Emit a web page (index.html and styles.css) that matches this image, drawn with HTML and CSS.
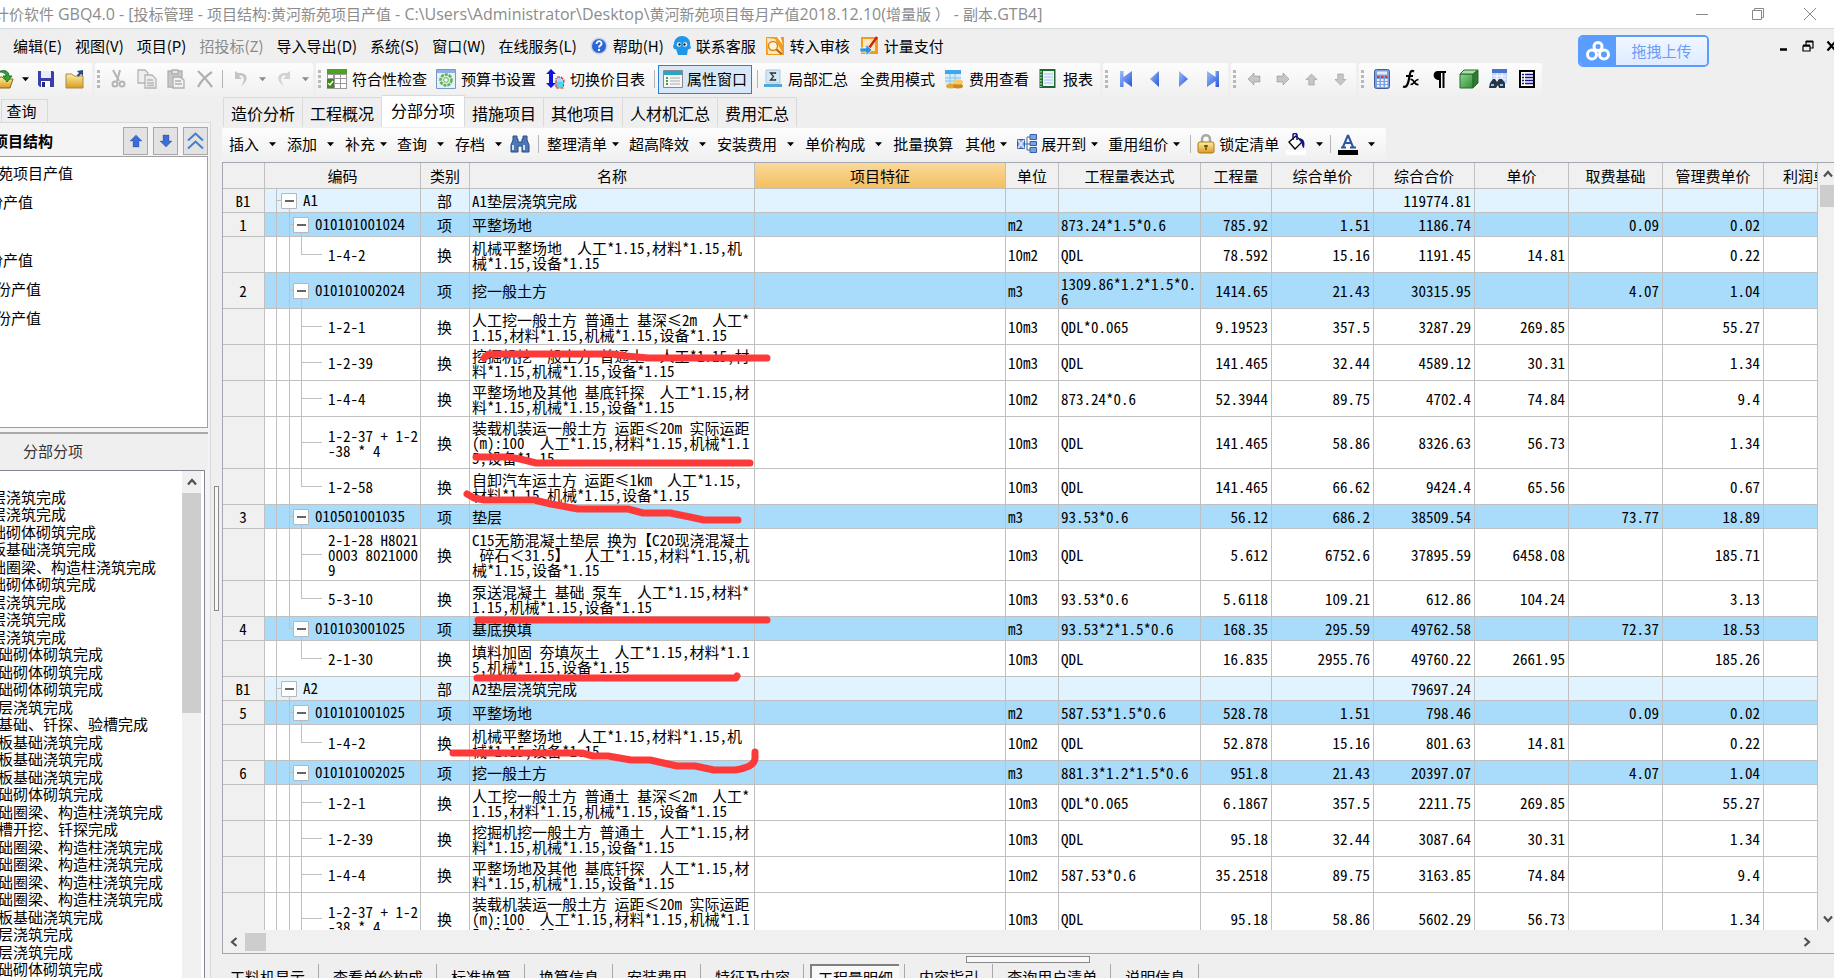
FILE: index.html
```html
<!DOCTYPE html>
<html lang="zh-CN">
<head>
<meta charset="utf-8">
<title>计价软件 GBQ4.0</title>
<link rel="stylesheet" href="styles.css">
</head>
<body>
<svg class="defs" aria-hidden="true">
<defs>
<linearGradient id="blue" x1="0" y1="0" x2="1" y2="1"><stop offset="0" stop-color="#9cc0ff"/><stop offset="1" stop-color="#2a55d8"/></linearGradient>
<linearGradient id="gold" x1="0" y1="0" x2="0" y2="1"><stop offset="0" stop-color="#fff0a0"/><stop offset="1" stop-color="#d99a20"/></linearGradient>
<linearGradient id="green" x1="0" y1="0" x2="1" y2="1"><stop offset="0" stop-color="#8fd68f"/><stop offset="1" stop-color="#2e8a35"/></linearGradient>
<symbol id="caret" viewBox="0 0 8 5"><path d="M0 0h8L4 4.5z" fill="currentColor"/></symbol>
<symbol id="arrow" viewBox="0 0 14 14"><path d="M7 1l6 6h-3v6H4V7H1z" fill="currentColor" stroke="#0003"/></symbol>
<symbol id="chev" viewBox="0 0 10 8"><path d="M1 6.5L5 2l4 4.5" fill="none" stroke="#505050" stroke-width="2.2"/></symbol>
<symbol id="minus" viewBox="0 0 16 16"><path d="M.5.5h15v15H.5z" fill="#fff" stroke="#b8b8b8"/><path d="M4 8h9" stroke="#222" stroke-width="1.4"/></symbol>
</defs>
</svg>

<header class="titlebar">
<h1 class="title">计价软件 <span>GBQ4.0 - [</span>投标管理<span> - </span>项目结构:黄河新苑项目产值<span> - C:\Users\Administrator\Desktop\</span>黄河新苑项目每月产值<span>2018.12.10(</span>增量版 ） <span>- </span>副本<span>.GTB4]</span></h1>
<div class="win-controls">
<button aria-label="最小化"><svg width="12" height="12" viewBox="0 0 12 12"><path d="M0 6.5h12" stroke="#888"/></svg></button>
<button aria-label="还原"><svg width="12" height="12" viewBox="0 0 12 12"><path d="M.5 2.500h9v9h-9zM2.500 2.500v-2h9v9h-2" fill="none" stroke="#888"/></svg></button>
<button aria-label="关闭"><svg width="12" height="12" viewBox="0 0 12 12"><path d="M0 0l12 12M12 0L0 12" stroke="#888"/></svg></button>
</div>
</header>

<nav class="menubar">
<button>编辑(E)</button><button>视图(V)</button><button>项目(P)</button><button class="dim">招投标(Z)</button><button>导入导出(D)</button><button>系统(S)</button><button>窗口(W)</button><button>在线服务(L)</button>
<button class="ico-item"><svg width="18" height="18" viewBox="0 0 18 18"><circle cx="9" cy="9" r="8.500" fill="#c8d4ea"/><circle cx="9" cy="9" r="7" fill="#2a66d8"/><path d="M6.500 7c0-4 5.500-3.500 5 0C11.300 8.500 9 8.500 9 10.500" fill="none" stroke="#fff" stroke-width="1.800"/><circle cx="9" cy="13" r="1.200" fill="#fff"/></svg>帮助(H)</button>
<button class="ico-item"><svg width="18" height="20" viewBox="0 0 18 20"><path d="M9 0C14 0 18 4 17 9c2 3 0 5-2 4l-1 6H5l-2-6c-2 1-4-2-2-5C1 3 5 0 9 0z" fill="#1e96ea"/><circle cx="6" cy="8.500" r="2.200" fill="#fff"/><circle cx="12" cy="8.500" r="2.200" fill="#fff"/><circle cx="6.500" cy="8.500" r="1.200" fill="#023"/><circle cx="11.500" cy="8.500" r="1.200" fill="#023"/></svg>联系客服</button>
<button class="ico-item"><svg width="20" height="20" viewBox="0 0 20 20"><path d="M1 1h18v18H1z" fill="#f29b1c"/><path d="M2 2l8 1 7 13-1 2H3z" fill="#fbe9bd"/><circle cx="8" cy="10" r="4.500" fill="#fff6da" stroke="#d8871c" stroke-width="1.500"/><path d="M11.500 13.500l5 4.500" stroke="#b05d10" stroke-width="2"/><path d="M12 1l6 8-3-9" fill="#fff"/></svg>转入审核</button>
<button class="ico-item"><svg width="20" height="20" viewBox="0 0 20 20"><path d="M2 1h17v17H2z" fill="#f29b1c"/><path d="M4 3h12v12H4z" fill="#fbe9bd"/><path d="M7 10l3 2 8-11" fill="none" stroke="#c8240f" stroke-width="2.500"/><path d="M1 12h6V8.500l6 5.500-6 5.500V16H1z" fill="#2d92dd" stroke="#fff" stroke-width=".7"/></svg>计量支付</button>
<button class="upload"><span class="upload-logo"><svg width="24" height="20" viewBox="0 0 24 20" fill="none" stroke="#fff" stroke-width="3"><circle cx="12" cy="5.500" r="4"/><circle cx="6" cy="13.500" r="4.500"/><circle cx="18" cy="13.500" r="4.500"/></svg></span><span class="upload-text">拖拽上传</span></button>
<div class="mdi">
<button aria-label="最小化子窗口"><svg width="12" height="12" viewBox="0 0 12 12"><path d="M2 9.500h7" stroke="#000" stroke-width="2.500"/></svg></button>
<button aria-label="还原子窗口"><svg width="12" height="12" viewBox="0 0 12 12"><path d="M1 6h7v5H1zM4 5.500V1.500h7V8H8.500" fill="none" stroke="#000" stroke-width="1.200"/><path d="M1 5.500h7M4 1.500h7" stroke="#000" stroke-width="2"/></svg></button>
<button aria-label="关闭子窗口"><svg width="12" height="12" viewBox="0 0 12 12"><path d="M1.500 1.500l8 9M9.500 1.500l-8 9" stroke="#000" stroke-width="2.200"/></svg></button>
</div>
</nav>

<div class="toolbars">
<div class="seg seg-file">
<button aria-label="打开"><svg width="20" height="20" viewBox="0 0 20 20"><path d="M0 8h8l2 2h9l-3 9H0z" fill="url(#gold)" stroke="#8a6a10"/><path d="M4 3c6-3 11-1 11 4h3l-5 6-4-6h3c0-3-3-4-8-4z" fill="#2fa52f" stroke="#12601a" stroke-width=".8"/></svg></button>
<button class="drop" aria-label="打开选项"><svg width="7" height="5"><use href="#caret"/></svg></button>
<button aria-label="保存"><svg width="20" height="20" viewBox="0 0 20 20"><path d="M2 2h15l1 1v15H4l-2-2z" fill="#3a3fae"/><path d="M5 2h10v7H5z" fill="#e8ecf8"/><path d="M5 12h9v6H5z" fill="#fff"/><path d="M6 13h3v5H6z" fill="#222a80"/></svg></button>
<button class="folder" aria-label="另存"><svg width="20" height="20" viewBox="0 0 20 20"><path d="M1 5h6l2 2h9v12H1z" fill="url(#gold)" stroke="#a88a50"/><path d="M12 2l6-1v6l-2-2-3 3-1-2 2-2z" fill="#2b4a78"/></svg></button>
</div>
<div class="seg">
<i class="grip"></i>
<button class="slot" aria-label="剪切"><svg width="20" height="20" viewBox="0 0 20 20" fill="none" stroke="#b4b4b4" stroke-width="2"><path d="M5 1l6 11M12 1L9 12"/><circle cx="7" cy="15" r="2.500"/><circle cx="14" cy="15" r="2.500"/></svg></button>
<button class="slot" aria-label="复制"><svg width="20" height="20" viewBox="0 0 20 20" fill="#eee" stroke="#b4b4b4" stroke-width="1.300"><path d="M1 1h7l3 3v10H1z"/><path d="M8 6h7l4 4v9H8zM10 11h6M10 14h7M10 16.500h7"/></svg></button>
<button class="slot" aria-label="粘贴"><svg width="20" height="20" viewBox="0 0 20 20" fill="#c8c8c8" stroke="#b0b0b0" stroke-width="1.300"><path d="M2 2h14v16H2z"/><path d="M6 1h6v4H6z" fill="#e6e6e6"/><path d="M7 8h7l4 3v8H7zM9 12h6M9 15h7" fill="#f2f2f2"/></svg></button>
<button class="slot" aria-label="删除"><svg width="18" height="18" viewBox="0 0 18 18"><path d="M2 1c4 4 9 9 14 16M16 2C10 6 5 11 2 17" fill="none" stroke="#b0b0b0" stroke-width="2.200"/></svg></button>
<i class="sep"></i>
<button class="slot" aria-label="撤销"><svg width="16" height="18" viewBox="0 0 16 18"><path d="M2 1v8h7L6 6c5-2 7 4 2 10 8-5 8-14-3-13z" fill="#c4c4c4"/></svg></button>
<button class="drop small dim" aria-label="撤销列表"><svg width="7" height="5"><use href="#caret"/></svg></button>
<button class="slot" aria-label="重做"><svg width="16" height="18" viewBox="0 0 16 18"><path d="M14 1v8H7l3-3C5 4 3 10 8 16 0 11 0 2 11 3z" fill="#d2d2d2"/></svg></button>
<button class="drop small dim" aria-label="重做列表"><svg width="7" height="5"><use href="#caret"/></svg></button>
</div>
<div class="seg seg-main">
<i class="grip"></i>
<button class="tool"><svg width="20" height="20" viewBox="0 0 20 20"><path d="M0 0h20v20H0z" fill="#9a9a9a"/><path d="M0 0h20v5H0z" fill="#4da31c"/><path d="M1 6h5v3H1zM14 6h5v3h-5zM8 6h5v3H8zM8 10h5v4H8zM14 10h5v4h-5zM8 15h5v4H8zM14 15h5v4h-5z" fill="#fff"/><path d="M0 10h7v9H0z" fill="#3c8a14"/><path d="M1 14l2 2 3-4" fill="none" stroke="#fff" stroke-width="1.300"/></svg>符合性检查</button>
<button class="tool"><svg width="20" height="20" viewBox="0 0 20 20"><path d="M.5.5h19v19H.5z" fill="#e4f0fa" stroke="#7896c8"/><path d="M1 1h18v3H1z" fill="#8fb0e4"/><circle cx="10" cy="11" r="5.500" fill="#d9efd2" stroke="#5fae5a" stroke-width="2.500" stroke-dasharray="3 1"/><circle cx="10" cy="11" r="2.300" fill="#fff" stroke="#5fae5a"/></svg>预算书设置</button>
<button class="tool"><svg width="20" height="20" viewBox="0 0 20 20"><path d="M6 0l5 5H8v9h3l-5 5-5-5h3V5H1z" fill="#1016d8"/><path d="M12 8h4l3 3-1 8h-7V9" fill="#9df" stroke="#e02020" stroke-width="1.200" stroke-dasharray="3 1"/><path d="M12 13h6v5h-6z" fill="#4fd7e8"/></svg>切换价目表</button>
<i class="sep"></i>
<button class="tool on"><svg width="20" height="20" viewBox="0 0 20 20"><path d="M.5 1.500h19v17H.5z" fill="#f6f6f6" stroke="#8a8a8a"/><path d="M1 2h18v4H1z" fill="#28a6c4"/><path d="M3 8h2v2H3zM3 11h2v2H3zM3 14h2v2H3z" fill="#45a53a"/><path d="M7 9h10M7 12h10M7 15h10" stroke="#aaa"/></svg>属性窗口</button>
<i class="sep"></i>
<button class="tool first"><svg width="20" height="20" viewBox="0 0 20 20"><path d="M3 1h14v13H3z" fill="#d3e9f5" stroke="#a8c8dc"/><path d="M1 15h18v3H1z" fill="#52a9d8"/><path d="M12.500 5V4H7.500l3 3.500-3 3.500h5v-1" fill="none" stroke="#333" stroke-width="1.300"/></svg>局部汇总</button>
<button class="tool plain">全费用模式</button>
<button class="tool"><svg width="20" height="20" viewBox="0 0 20 20"><path d="M1 1h16v14H1z" fill="#d2ecfb"/><path d="M1 1h16v4H1z" fill="#40a8ea"/><path d="M1 9h16M1 12h16M6 5v10M11 5v10" stroke="#88c4ec"/><ellipse cx="7" cy="17" rx="5" ry="2.500" fill="#e0a73a"/><ellipse cx="14" cy="17" rx="5" ry="2.500" fill="#c98b1e"/><ellipse cx="14" cy="13" rx="5" ry="2.500" fill="#f3cc6a"/></svg>费用查看</button>
<button class="tool"><svg width="20" height="20" viewBox="0 0 20 20"><path d="M1.500 0h16v19h-16z" fill="#1d6b2c"/><path d="M5 2h11v15H5z" fill="#eef4ff"/><path d="M6 5h9M6 8h9M6 11h9M6 14h9" stroke="#a9c0e8"/><path d="M3 2v16" stroke="#fff" stroke-dasharray="1.500 1.500"/></svg>报表</button>
</div>
<div class="seg">
<i class="grip"></i>
<button class="slot" aria-label="首条"><svg width="12" height="16" viewBox="0 0 12 16"><path d="M0 0h3.500v6L12 0v16L3.500 10v6H0z" fill="url(#blue)"/></svg></button>
<button class="slot" aria-label="上一条"><svg width="9" height="16" viewBox="0 0 9 16"><path d="M9 0v16L0 8z" fill="url(#blue)"/></svg></button>
<button class="slot" aria-label="下一条"><svg width="9" height="16" viewBox="0 0 9 16"><path d="M0 0v16l9-8z" fill="url(#blue)"/></svg></button>
<button class="slot" aria-label="末条"><svg width="12" height="16" viewBox="0 0 12 16"><path d="M12 0H8.500v6L0 0v16l8.500-6v6H12z" fill="url(#blue)"/></svg></button>
</div>
<div class="seg move">
<i class="grip"></i>
<button class="slot" aria-label="左移"><svg class="left" width="14" height="14"><use href="#arrow"/></svg></button>
<button class="slot" aria-label="右移"><svg class="right" width="14" height="14"><use href="#arrow"/></svg></button>
<button class="slot" aria-label="上移"><svg width="13" height="13"><use href="#arrow"/></svg></button>
<button class="slot" aria-label="下移"><svg class="down" width="13" height="13"><use href="#arrow"/></svg></button>
</div>
<div class="seg">
<i class="grip"></i>
<button class="slot" aria-label="计算器"><svg width="16" height="20" viewBox="0 0 16 20"><rect x=".5" y=".5" width="15" height="19" rx="2" fill="#7ba2dc" stroke="#3d5f9c"/><path d="M3 2.500h10v3H3z" fill="#e4eefb"/><path d="M3 8h2.500M7 8h2.500M11 8h2.500" stroke="#d33" stroke-width="2"/><path d="M3 11h11M3 14h11M3 17h11" stroke="#eef" stroke-width="2" stroke-dasharray="2.500 1.500"/></svg></button>
<button class="slot" aria-label="函数"><svg width="18" height="20" viewBox="0 0 18 20" fill="none" stroke="#000" stroke-width="2.200"><path d="M12 2.500C8 0 8 5 7 10s-2 9-6 7.500M4 7h7"/><path d="M8.500 10.500c4-1 3 6 8 5M16.500 10.500c-4 0-4 5-8 5" stroke-width="1.700"/></svg></button>
<button class="slot" aria-label="段落"><svg width="14" height="18" viewBox="0 0 14 18"><path d="M13 1v2h-1.500v15H9.500V3H8v15H6V10C-1 10-1 1 5 1z" fill="#000"/></svg></button>
<button class="slot" aria-label="模型"><svg width="20" height="20" viewBox="0 0 20 20"><path d="M1 5h13v14H1z" fill="url(#green)" stroke="#2a6a2e"/><path d="M1 5l4-4h14l-5 4z" fill="#a9e0a5" stroke="#2a6a2e"/><path d="M14 5l5-4v13l-5 5z" fill="#2d7a33" stroke="#2a6a2e"/></svg></button>
<button class="slot" aria-label="查找"><svg width="20" height="20" viewBox="0 0 20 20"><path d="M4 0h15v14H4z" fill="#c3d6f7"/><path d="M4 0h15v4H4z" fill="#4a74cc"/><path d="M5 7h13M5 10h13M9 4v9M14 4v9" stroke="#fff"/><path d="M2 14l3-4h2l2 3 2-3h3l3 4v5h-6l-1-3-2 3H1z" fill="#263448"/><path d="M3 15h3v2H3zM12 15h3v2h-3z" fill="#8cc3ee"/></svg></button>
<button class="slot" aria-label="清单"><svg width="16" height="18" viewBox="0 0 16 18"><path d="M1 1h14v16H1z" fill="#fff" stroke="#000" stroke-width="2"/><path d="M3 4.500h2M3 7.500h2M3 10.500h2M3 13.500h2M6 4.500h8M6 7.500h8M6 10.500h8M6 13.500h8" stroke="#141487" stroke-width="1.300"/></svg></button>
</div>
</div>

<main class="main">
<aside class="side">
<div class="side-tabs"><button>查询</button></div>
<div class="side-frame">
<div class="side-head"><h2>项目结构</h2>
<button aria-label="上移"><svg width="14" height="14"><use href="#arrow"/></svg></button>
<button aria-label="下移"><svg class="down" width="14" height="14"><use href="#arrow"/></svg></button>
<button aria-label="折叠"><svg width="17" height="18" viewBox="0 0 17 18" fill="none" stroke="#3f7fd0" stroke-width="2"><path d="M1 8.500L8.500 1.500 16 8.500M1 16.500L8.500 9.500l7.500 7"/></svg></button>
</div>
<ul class="project-tree"><li>苑项目产值</li><li class="in">份产值</li><li></li><li class="in">份产值</li><li class="in2">份产值</li><li class="in2">份产值</li></ul>
<h2 class="sub-head">分部分项</h2>
<div class="parts">
<ul>
<li class="cut">层浇筑完成</li><li class="cut">层浇筑完成</li><li class="cut">础砌体砌筑完成</li><li class="cut">板基础浇筑完成</li><li class="cut">础圈梁、构造柱浇筑完成</li><li class="cut">础砌体砌筑完成</li><li class="cut">层浇筑完成</li><li class="cut">层浇筑完成</li><li class="cut">层浇筑完成</li><li>础砌体砌筑完成</li><li>础砌体砌筑完成</li><li>础砌体砌筑完成</li><li>层浇筑完成</li><li>基础、钎探、验槽完成</li><li>板基础浇筑完成</li><li>板基础浇筑完成</li><li>板基础浇筑完成</li><li>础砌体砌筑完成</li><li>础圈梁、构造柱浇筑完成</li><li>槽开挖、钎探完成</li><li>础圈梁、构造柱浇筑完成</li><li>础圈梁、构造柱浇筑完成</li><li>础圈梁、构造柱浇筑完成</li><li>础圈梁、构造柱浇筑完成</li><li>板基础浇筑完成</li><li>层浇筑完成</li><li>层浇筑完成</li><li>础砌体砌筑完成</li>
</ul>
<div class="vbar"><button aria-label="向上滚动"><svg width="10" height="8"><use href="#chev"/></svg></button><div class="thumb"></div></div>
</div>
</div>
</aside>
<div class="splitter"><i></i></div>

<section class="work">
<div class="tabs">
<button>造价分析</button><button>工程概况</button><button class="on">分部分项</button><button>措施项目</button><button>其他项目</button><button>人材机汇总</button><button>费用汇总</button>
</div>
<div class="actions">
<button class="wide">插入<svg width="7" height="5"><use href="#caret"/></svg></button>
<button class="wide">添加<svg width="7" height="5"><use href="#caret"/></svg></button>
<button class="narrow">补充<svg width="7" height="5"><use href="#caret"/></svg></button>
<button class="wide">查询<svg width="7" height="5"><use href="#caret"/></svg></button>
<button class="wide">存档<svg width="7" height="5"><use href="#caret"/></svg></button>
<button class="find" aria-label="查找"><svg width="20" height="18" viewBox="0 0 20 18"><path d="M3 5V1h4v3h1v3h4V4h1V1h4v4l2 5v7h-7v-6H8v6H1v-7z" fill="#4c78ba" stroke="#284a80"/><path d="M3 10v5M14 10v5" stroke="#cfe0f6" stroke-width="2"/></svg></button>
<i class="sep"></i>
<button class="narrow">整理清单<svg width="7" height="5"><use href="#caret"/></svg></button>
<button class="wide">超高降效<svg width="7" height="5"><use href="#caret"/></svg></button>
<button class="wide">安装费用<svg width="7" height="5"><use href="#caret"/></svg></button>
<button class="wide">单价构成<svg width="7" height="5"><use href="#caret"/></svg></button>
<button class="spaced">批量换算</button>
<button class="narrow">其他<svg width="7" height="5"><use href="#caret"/></svg></button>
<button class="narrow lead"><svg width="20" height="20" viewBox="0 0 20 20"><path d="M7 10h6M10 10V3h3M10 10v6h3" fill="none" stroke="#4668a8"/><path d="M.5 5.500h7v9h-7zM13 .5h6.500v5H13zM13 7.500h6.500v4H13zM13 13.500h6.500v5H13z" fill="#7ba2e0" stroke="#3460a8"/><path d="M1 6l6 8M7 6l-6 8" stroke="#dce8fa" stroke-width="1.500"/></svg>展开到<svg width="7" height="5"><use href="#caret"/></svg></button>
<button class="narrow">重用组价<svg width="7" height="5"><use href="#caret"/></svg></button>
<i class="sep tight"></i>
<button class="lead lock"><svg width="18" height="20" viewBox="0 0 18 20"><path d="M5 9V5c0-5 8-5 8 0v4" fill="none" stroke="#a8a8a8" stroke-width="2.500"/><rect x="1" y="8" width="16" height="11" rx="2" fill="url(#gold)" stroke="#a87818"/><path d="M9 11v5M7 12h4" stroke="#6b4a10" stroke-width="1.500"/></svg>锁定清单</button>
<button class="wide" aria-label="填充颜色"><svg width="20" height="22" viewBox="0 0 20 22"><path d="M0 17h20v5H0z" fill="#fff"/><path d="M3 9l7-6 6 6-7 7z" fill="#fff" stroke="#000" stroke-width="1.300"/><path d="M7 7V2c0-2 4-2 4 0v5" fill="none" stroke="#10108c" stroke-width="1.500"/><path d="M13 5c6 1 6 5 5 10-2 0-2-5-3-6z" fill="#10108c"/></svg><svg width="7" height="5"><use href="#caret"/></svg></button>
<i class="sep fore"></i>
<button class="wide" aria-label="字体颜色"><svg width="20" height="22" viewBox="0 0 20 22"><path d="M0 17h20v5H0z" fill="#000"/><path d="M10 2L5 14M10 2l5 12M7 10h6M3 14.500h5M12 14.500h6" fill="none" stroke="#2e569c" stroke-width="2"/></svg><svg width="7" height="5"><use href="#caret"/></svg></button>
</div>

<div class="grid">
<div class="grid-body">
<div class="viewport">
<table>
<colgroup><col class="w42"><col class="w156"><col class="w49"><col class="w285"><col><col class="w53"><col class="w142"><col class="w71"><col class="w102"><col class="w101"><col class="w94"><col class="w94"><col class="w101"><col class="w54"></colgroup>
<thead><tr><th></th><th>编码</th><th>类别</th><th>名称</th><th class="sel">项目特征</th><th>单位</th><th>工程量表达式</th><th>工程量</th><th>综合单价</th><th>综合合价</th><th>单价</th><th>取费基础</th><th>管理费单价</th><th class="clip">利润单价</th></tr></thead>
<tbody>
<tr class="part"><th>B1</th><td class="l0"><button aria-label="折叠"><svg width="16" height="16"><use href="#minus"/></svg></button>A1</td><td>部</td><td>A1垫层浇筑完成</td><td></td><td></td><td></td><td></td><td></td><td>119774.81</td><td></td><td></td><td></td><td></td></tr>
<tr class="item"><th>1</th><td class="l1"><button aria-label="折叠"><svg width="16" height="16"><use href="#minus"/></svg></button>010101001024</td><td>项</td><td>平整场地</td><td></td><td>m2</td><td>873.24*1.5*0.6</td><td>785.92</td><td>1.51</td><td>1186.74</td><td></td><td>0.09</td><td>0.02</td><td></td></tr>
<tr class="two"><th></th><td class="l2 last">1-4-2</td><td>换</td><td>机械平整场地  人工*1.15,材料*1.15,机<br>械*1.15,设备*1.15</td><td></td><td>10m2</td><td>QDL</td><td>78.592</td><td>15.16</td><td>1191.45</td><td>14.81</td><td></td><td>0.22</td><td></td></tr>
<tr class="item two"><th>2</th><td class="l1"><button aria-label="折叠"><svg width="16" height="16"><use href="#minus"/></svg></button>010101002024</td><td>项</td><td>挖一般土方</td><td></td><td>m3</td><td>1309.86*1.2*1.5*0.<br>6</td><td>1414.65</td><td>21.43</td><td>30315.95</td><td></td><td>4.07</td><td>1.04</td><td></td></tr>
<tr class="two"><th></th><td class="l2">1-2-1</td><td>换</td><td>人工挖一般土方 普通土 基深≤2m  人工*<br>1.15,材料*1.15,机械*1.15,设备*1.15</td><td></td><td>10m3</td><td>QDL*0.065</td><td>9.19523</td><td>357.5</td><td>3287.29</td><td>269.85</td><td></td><td>55.27</td><td></td></tr>
<tr class="two"><th></th><td class="l2">1-2-39</td><td>换</td><td>挖掘机挖一般土方 普通土  人工*1.15,材<br>料*1.15,机械*1.15,设备*1.15</td><td></td><td>10m3</td><td>QDL</td><td>141.465</td><td>32.44</td><td>4589.12</td><td>30.31</td><td></td><td>1.34</td><td></td></tr>
<tr class="two"><th></th><td class="l2">1-4-4</td><td>换</td><td>平整场地及其他 基底钎探  人工*1.15,材<br>料*1.15,机械*1.15,设备*1.15</td><td></td><td>10m2</td><td>873.24*0.6</td><td>52.3944</td><td>89.75</td><td>4702.4</td><td>74.84</td><td></td><td>9.4</td><td></td></tr>
<tr class="three"><th></th><td class="l2">1-2-37 + 1-2<br>-38 * 4</td><td>换</td><td>装载机装运一般土方 运距≤20m 实际运距<br>(m):100  人工*1.15,材料*1.15,机械*1.1<br>5,设备*1.15</td><td></td><td>10m3</td><td>QDL</td><td>141.465</td><td>58.86</td><td>8326.63</td><td>56.73</td><td></td><td>1.34</td><td></td></tr>
<tr class="two"><th></th><td class="l2 last">1-2-58</td><td>换</td><td>自卸汽车运土方 运距≤1km  人工*1.15,<br>材料*1.15,机械*1.15,设备*1.15</td><td></td><td>10m3</td><td>QDL</td><td>141.465</td><td>66.62</td><td>9424.4</td><td>65.56</td><td></td><td>0.67</td><td></td></tr>
<tr class="item"><th>3</th><td class="l1"><button aria-label="折叠"><svg width="16" height="16"><use href="#minus"/></svg></button>010501001035</td><td>项</td><td>垫层</td><td></td><td>m3</td><td>93.53*0.6</td><td>56.12</td><td>686.2</td><td>38509.54</td><td></td><td>73.77</td><td>18.89</td><td></td></tr>
<tr class="three"><th></th><td class="l2">2-1-28 H8021<br>0003 8021000<br>9</td><td>换</td><td>C15无筋混凝土垫层 换为【C20现浇混凝土<br> 碎石＜31.5】  人工*1.15,材料*1.15,机<br>械*1.15,设备*1.15</td><td></td><td>10m3</td><td>QDL</td><td>5.612</td><td>6752.6</td><td>37895.59</td><td>6458.08</td><td></td><td>185.71</td><td></td></tr>
<tr class="two"><th></th><td class="l2 last">5-3-10</td><td>换</td><td>泵送混凝土 基础 泵车  人工*1.15,材料*<br>1.15,机械*1.15,设备*1.15</td><td></td><td>10m3</td><td>93.53*0.6</td><td>5.6118</td><td>109.21</td><td>612.86</td><td>104.24</td><td></td><td>3.13</td><td></td></tr>
<tr class="item"><th>4</th><td class="l1 last"><button aria-label="折叠"><svg width="16" height="16"><use href="#minus"/></svg></button>010103001025</td><td>项</td><td>基底换填</td><td></td><td>m3</td><td>93.53*2*1.5*0.6</td><td>168.35</td><td>295.59</td><td>49762.58</td><td></td><td>72.37</td><td>18.53</td><td></td></tr>
<tr class="two"><th></th><td class="l2 last end">2-1-30</td><td>换</td><td>填料加固 夯填灰土  人工*1.15,材料*1.1<br>5,机械*1.15,设备*1.15</td><td></td><td>10m3</td><td>QDL</td><td>16.835</td><td>2955.76</td><td>49760.22</td><td>2661.95</td><td></td><td>185.26</td><td></td></tr>
<tr class="part"><th>B1</th><td class="l0"><button aria-label="折叠"><svg width="16" height="16"><use href="#minus"/></svg></button>A2</td><td>部</td><td>A2垫层浇筑完成</td><td></td><td></td><td></td><td></td><td></td><td>79697.24</td><td></td><td></td><td></td><td></td></tr>
<tr class="item"><th>5</th><td class="l1"><button aria-label="折叠"><svg width="16" height="16"><use href="#minus"/></svg></button>010101001025</td><td>项</td><td>平整场地</td><td></td><td>m2</td><td>587.53*1.5*0.6</td><td>528.78</td><td>1.51</td><td>798.46</td><td></td><td>0.09</td><td>0.02</td><td></td></tr>
<tr class="two"><th></th><td class="l2 last">1-4-2</td><td>换</td><td>机械平整场地  人工*1.15,材料*1.15,机<br>械*1.15,设备*1.15</td><td></td><td>10m2</td><td>QDL</td><td>52.878</td><td>15.16</td><td>801.63</td><td>14.81</td><td></td><td>0.22</td><td></td></tr>
<tr class="item"><th>6</th><td class="l1"><button aria-label="折叠"><svg width="16" height="16"><use href="#minus"/></svg></button>010101002025</td><td>项</td><td>挖一般土方</td><td></td><td>m3</td><td>881.3*1.2*1.5*0.6</td><td>951.8</td><td>21.43</td><td>20397.07</td><td></td><td>4.07</td><td>1.04</td><td></td></tr>
<tr class="two"><th></th><td class="l2">1-2-1</td><td>换</td><td>人工挖一般土方 普通土 基深≤2m  人工*<br>1.15,材料*1.15,机械*1.15,设备*1.15</td><td></td><td>10m3</td><td>QDL*0.065</td><td>6.1867</td><td>357.5</td><td>2211.75</td><td>269.85</td><td></td><td>55.27</td><td></td></tr>
<tr class="two"><th></th><td class="l2">1-2-39</td><td>换</td><td>挖掘机挖一般土方 普通土  人工*1.15,材<br>料*1.15,机械*1.15,设备*1.15</td><td></td><td>10m3</td><td>QDL</td><td>95.18</td><td>32.44</td><td>3087.64</td><td>30.31</td><td></td><td>1.34</td><td></td></tr>
<tr class="two"><th></th><td class="l2">1-4-4</td><td>换</td><td>平整场地及其他 基底钎探  人工*1.15,材<br>料*1.15,机械*1.15,设备*1.15</td><td></td><td>10m2</td><td>587.53*0.6</td><td>35.2518</td><td>89.75</td><td>3163.85</td><td>74.84</td><td></td><td>9.4</td><td></td></tr>
<tr class="three"><th></th><td class="l2">1-2-37 + 1-2<br>-38 * 4</td><td>换</td><td>装载机装运一般土方 运距≤20m 实际运距<br>(m):100  人工*1.15,材料*1.15,机械*1.1<br>5,设备*1.15</td><td></td><td>10m3</td><td>QDL</td><td>95.18</td><td>58.86</td><td>5602.29</td><td>56.73</td><td></td><td>1.34</td><td></td></tr>
</tbody>
</table>
<svg class="marks" width="560" height="640" viewBox="223 163 560 640" fill="none" stroke="#fd3a3a" stroke-width="7" stroke-linecap="round" stroke-linejoin="round">
<path d="M484 358L489 354H590L612 354L626 356L648 358H767"/>
<path d="M476 457H508L520 459L536 463H750"/>
<path d="M467 494L474 498L484 500H534L551 504L578 509H628L643 513H670L690 517L704 520H738"/>
<path d="M478 620H767"/>
<path d="M477 678H736L737 676"/>
<path d="M453 753H582L593 756H608L631 760H650L677 766H695L714 770H735Q755 767 755 758V752"/>
</svg>
</div>
<div class="vbar grid-vbar"><button aria-label="向上滚动"><svg width="10" height="8"><use href="#chev"/></svg></button><div class="thumb"></div><button class="end" aria-label="向下滚动"><svg class="down" width="10" height="8"><use href="#chev"/></svg></button></div>
</div>
<div class="hbar"><button aria-label="向左滚动"><svg class="left" width="10" height="8"><use href="#chev"/></svg></button><div class="thumb"></div><button class="end" aria-label="向右滚动"><svg class="right" width="10" height="8"><use href="#chev"/></svg></button></div>
</div>
<div class="hsplit"><i></i></div>
<div class="bottom-tabs">
<button>工料机显示</button><button>查看单价构成</button><button>标准换算</button><button>换算信息</button><button>安装费用</button><button>特征及内容</button><button class="on"><span>工程量明细</span></button><button>内容指引</button><button>查询用户清单</button><button>说明信息</button>
</div>
</section>
</main>
</body>
</html>
```
FILE: styles.css
```css
* { box-sizing: border-box; }
body {
  margin: 0;
  height: 100vh;
  overflow: hidden;
  display: flex;
  flex-direction: column;
  background: #efefef;
  color: #000;
  font: 15px/20px "Noto Sans CJK SC", sans-serif;
}
button {
  margin: 0;
  padding: 0;
  border: 0;
  background: none;
  color: inherit;
  font: inherit;
  white-space: nowrap;
  display: flex;
  align-items: center;
  justify-content: center;
}
svg { flex: none; display: block; }
ul { margin: 0; padding: 0; list-style: none; }
.defs { position: absolute; width: 0; height: 0; }
.dim { color: #8a8a8a; }
.left { transform: rotate(-90deg); }
.right { transform: rotate(90deg); }
.down { transform: rotate(180deg); }

.titlebar {
  flex: none;
  height: 29px;
  display: flex;
  align-items: center;
  background: #fff;
  border-bottom: 1px solid #d4d8d8;
}
.title {
  flex: 1;
  margin: 0 0 0 -6px;
  font: 15px/20px "Open Sans", "Noto Sans CJK SC", sans-serif;
  color: #8c8c8c;
  white-space: nowrap;
}
.title span { font-size: 16px; }
.win-controls { display: flex; }
.win-controls button { width: 56px; height: 28px; }
.win-controls button:last-child { width: 48px; }

.menubar {
  flex: none;
  height: 34px;
  padding-left: 13px;
  display: flex;
  align-items: center;
  gap: 13px;
}
.menubar .ico-item { gap: 5px; margin-right: -4px; }
.menubar .upload {
  width: 131px;
  height: 32px;
  margin-left: auto;
  margin-top: 10px;
  border: 2px solid #5b9dff;
  border-radius: 5px;
  overflow: hidden;
  align-items: stretch;
}
.upload-logo {
  width: 36px;
  display: flex;
  align-items: center;
  justify-content: center;
  background: #5b9dff;
}
.upload-text {
  flex: 1;
  line-height: 28px;
  color: #6d9cf8;
  background: linear-gradient(#f1f7ff, #dfebff);
}
.mdi { display: flex; gap: 12px; margin-left: 56px; }
.mdi button:last-child { margin-right: -4px; }

.toolbars { flex: none; height: 33px; display: flex; gap: 3px; }
.seg {
  display: flex;
  align-items: center;
  height: 32px;
  padding-right: 1px;
  border-radius: 2px;
  background: linear-gradient(#fdfdfd, #f0f0f0);
}
.seg-file { margin-left: -6px; padding-right: 7px; }
.seg-main { padding-right: 7px; }
.drop { width: 22px; height: 24px; }
.drop.small { width: 14px; }
.folder { margin-left: 9px; }
.grip {
  width: 3px;
  height: 18px;
  margin: 0 3px 0 2px;
  background: repeating-linear-gradient(#b8b8b8 0 3px, transparent 3px 5px);
}
.slot { width: 29px; height: 28px; }
.sep { width: 1px; height: 18px; margin: 0 3px; background: #b4b4b4; }
.tool { height: 29px; gap: 5px; margin-right: 9px; }
.grip + .tool { margin-left: 3px; }
.seg-main .sep { margin: 0 3px 0 0; }
.seg-main .on + .sep { margin: 0 5px; }
.seg-main .plain { margin-left: 3px; }
.seg-main .tool:last-child { margin-right: 0; }
.seg-main .on {
  margin: 0;
  padding: 0 4px;
  gap: 4px;
  border: 1px solid #2a82d8;
  background: #d8e8f8;
}
.move { color: #c6c6c6; }

.main { flex: 1; min-height: 0; display: flex; }
.side { flex: none; width: 211px; display: flex; flex-direction: column; min-height: 0; overflow: hidden; }
.side-tabs { flex: none; height: 26px; padding: 3px 0 0 1px; }
.side-tabs button { width: 47px; height: 23px; padding-right: 6px; border: 1px solid #d9d9d9; border-bottom: 0; }
.side-frame {
  flex: 1;
  min-height: 0;
  display: flex;
  flex-direction: column;
  padding: 3px 2px 0 0;
  border: solid #dadada;
  border-width: 1px 1px 0 0;
  background: #f4f4f4;
}
.side-head { flex: none; height: 30px; display: flex; align-items: center; gap: 5px; }
.side-head h2 { flex: 1; margin: 0 0 0 -7px; font-size: 15px; line-height: 20px; }
.side-head button { width: 25px; height: 28px; border: 1px solid #a8a8a8; background: #e2e2e2; color: #3a6ede; }
.project-tree {
  flex: 0 0 272px;
  padding-top: 1px;
  background: #fff;
  border: solid #a0a0a0;
  border-width: 1px 1px 1px 0;
}
.project-tree li { height: 29px; line-height: 29px; margin-left: -2px; }
.project-tree .in { margin-left: -12px; }
.project-tree .in2 { margin-left: -4px; }
.sub-head {
  flex: none;
  height: 38px;
  margin: 4px 0 0;
  padding-left: 23px;
  border-top: 2px solid #a8a8a8;
  background: #efefef;
  font-size: 15px;
  font-weight: 400;
  line-height: 34px;
  color: #333;
}
.parts {
  flex: 1;
  min-height: 0;
  margin-right: 3px;
  display: flex;
  border: solid #828790;
  border-width: 1px 1px 0 0;
  background: #fff;
}
.parts ul {
  flex: 1;
  margin: 17px 0 0;
  display: grid;
  grid-auto-rows: 1fr;
  align-items: center;
  line-height: 16px;
}
.parts li { height: 16px; margin-left: -2px; white-space: nowrap; }
.parts .cut { margin-left: -9px; }
.vbar { flex: none; width: 22px; padding-right: 3px; display: flex; flex-direction: column; background: linear-gradient(90deg, #f0f0f0 19px, #fff 19px); }
.vbar button { width: 100%; height: 22px; }
.vbar .thumb { height: 220px; background: #cdcdcd; }

.splitter { flex: none; width: 11px; display: flex; align-items: center; justify-content: center; }
.splitter i { width: 5px; height: 125px; margin-top: 22px; border: 1px solid #8a8a8a; background: #f8f8f8; }

.work { flex: 1; min-width: 0; display: flex; flex-direction: column; }
.tabs { flex: none; height: 32px; padding: 0 0 0 1px; display: flex; align-items: flex-end; font-size: 16px; }
.tabs button {
  height: 30px;
  margin-bottom: 1px;
  padding: 0 7px;
  border: 1px solid #dadada;
  border-width: 1px 1px 0 0;
}
.tabs button:first-child { border-left-width: 1px; }
.tabs .on { height: 32px; padding: 0 9px 4px; background: #fff; }
.actions {
  flex: none;
  align-self: flex-start;
  height: 32px;
  padding: 0 0 0 7px;
  display: flex;
  align-items: center;
  background: linear-gradient(#fdfdfd, #f0f0f0);
}
.wide > svg:last-child { margin: 0 11px 0 10px; }
.narrow > svg:last-child { margin: 0 10px 0 5px; }
.actions .find { margin-left: -3px; }
.actions .spaced { margin-right: 12px; }
.actions .lead { gap: 4px; }
.actions .lead.narrow > svg:last-child { margin-left: 1px; }
.actions .lock { margin-right: 7px; }
.actions .sep { margin: 0 8px; }
.actions .tight { margin: 0 6px 0 0; }
.actions .fore { margin: 0 7px 0 -4px; }

.grid {
  flex: 1;
  min-height: 0;
  margin-top: 2px;
  display: flex;
  flex-direction: column;
  border: solid #a4a8b0;
  border-width: 1px 0 1px 1px;
}
.grid-body { flex: 1; min-height: 0; display: flex; }
.viewport { position: relative; flex: 1; min-width: 0; overflow: hidden; background: #fff; }
.marks { position: absolute; left: 0; top: 0; }
table {
  width: 100%;
  table-layout: fixed;
  border-collapse: separate;
  border-spacing: 0;
  font: 15px/15px "Noto Sans Mono CJK SC", "Noto Sans CJK SC", monospace;
}
.w42 { width: 42px; } .w49 { width: 49px; } .w53 { width: 53px; } .w54 { width: 54px; }
.w71 { width: 71px; } .w94 { width: 94px; } .w101 { width: 101px; } .w102 { width: 102px; }
.w142 { width: 142px; } .w156 { width: 156px; } .w285 { width: 285px; }
th, td {
  height: 24px;
  padding: 0 3px 0 2px;
  border: solid #c0c0c0;
  border-width: 0 1px 1px 0;
  font-weight: 400;
  text-align: left;
  vertical-align: middle;
  white-space: pre;
  overflow: hidden;
}
th { background: #f0f0f0; text-align: center; }
thead th { height: 26px; padding: 0; }
thead .sel { background: linear-gradient(#fbd99b, #f3bf60); }
thead .clip { padding-left: 19px; text-align: left; }
.two > * { height: 36px; }
.three > * { height: 52px; }
.part td { background-color: #e1f3ff; }
.item td { background-color: #a9dbfa; }
td:nth-child(3) { text-align: center; }
td:nth-child(n+8) { text-align: right; }
td button { display: inline-block; vertical-align: middle; margin-right: 6px; }

/* tree guides of the code column: outer, middle and inner verticals, then the branch */
.l0, .l1, .l2 {
  --ln: linear-gradient(#c0c0c0, #c0c0c0);
  background-image: var(--ln), var(--ln), var(--ln), var(--ln);
  background-repeat: no-repeat;
}
.l0 {
  padding-left: 16px;
  background-position: 11px 0, 24px 100%, 0 0, 11px 50%;
  background-size: 1px 100%, 1px 50%, 0 0, 6px 1px;
}
.l1 {
  padding-left: 28px;
  background-position: 11px 0, 24px 0, 36px 100%, 24px 50%;
  background-size: 1px 100%, 1px 100%, 1px 50%, 5px 1px;
}
.l1.last { background-size: 1px 100%, 1px 50%, 1px 50%, 5px 1px; }
.l2 {
  padding-left: 63px;
  background-position: 11px 0, 24px 0, 36px 0, 36px 50%;
  background-size: 1px 100%, 1px 100%, 1px 100%, 21px 1px;
}
.l2.last { background-size: 1px 100%, 1px 100%, 1px 50%, 21px 1px; }
.l2.end { background-size: 1px 100%, 0 0, 1px 50%, 21px 1px; }

.grid-vbar { width: 16px; padding: 0; background: #f0f0f0; }
.grid-vbar button { padding-left: 3px; }
.grid-vbar .thumb { height: 22px; margin-left: 2px; }
.grid-vbar .end { margin-top: auto; }
.hbar { flex: none; height: 23px; display: flex; align-items: center; background: #f0f0f0; }
.hbar button { width: 22px; height: 20px; }
.hbar .thumb { width: 21px; height: 18px; background: #cdcdcd; }
.hbar .end { margin-left: auto; margin-right: 16px; }
.hsplit { flex: none; height: 10px; display: flex; justify-content: center; align-items: center; }
.hsplit i { width: 124px; height: 7px; border: 1px solid #8a8a8a; background: #f8f8f8; }
.bottom-tabs { flex: none; height: 14px; overflow: hidden; display: flex; align-items: flex-start; }
.bottom-tabs button { height: 26px; padding: 0 13px 0 14px; border-right: 1px solid #a8a8a8; }
.bottom-tabs button:first-child { padding-left: 8px; }
.bottom-tabs .on { padding: 0 5px 0 6px; }
.bottom-tabs .on span { padding: 2px 6px; border: solid #808080; border-width: 2px 0 0 2px; background: #f8f8f8; }
```
